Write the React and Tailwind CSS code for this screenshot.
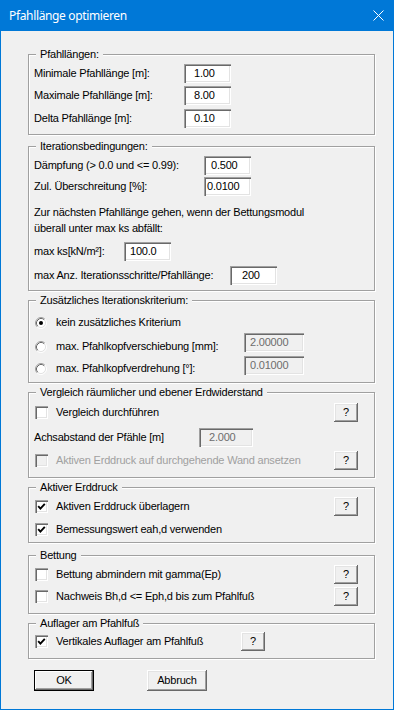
import React from "react";

const sunk =
  "shadow-[inset_1px_1px_0_#a0a0a0,inset_2px_2px_0_#696969,inset_-1px_-1px_0_#ffffff,inset_-2px_-2px_0_#e3e3e3]";
const raised =
  "shadow-[inset_-1px_-1px_0_#696969,inset_1px_1px_0_#ffffff,inset_-2px_-2px_0_#a0a0a0,inset_2px_2px_0_#e3e3e3]";

function Group({ className, title, children }) {
  return (
    <div
      className={
        "relative ml-[27px] w-[347px] shrink-0 border border-[#a0a0a0] shadow-[inset_1px_1px_0_#ffffff,1px_1px_0_#ffffff] pl-[5px] pr-[16px] flex flex-col " +
        className
      }
    >
      <span className="absolute left-[7px] -top-[7px] px-[4px] bg-[#f0f0f0] leading-[13px] whitespace-nowrap">
        {title}
      </span>
      {children}
    </div>
  );
}

function Field({ value, className, disabled }) {
  return (
    <div
      className={`h-[19px] shrink-0 leading-[19px] whitespace-nowrap ${sunk} ${
        disabled ? "bg-[#f0f0f0] text-[#6d6d6d]" : "bg-white text-black"
      } ${className}`}
    >
      {value}
    </div>
  );
}

function Help({ className = "" }) {
  return (
    <div
      className={`w-[24px] h-[19px] shrink-0 bg-[#f0f0f0] ${raised} flex items-center justify-center ${className}`}
    >
      ?
    </div>
  );
}

function Check({ checked, disabled }) {
  return (
    <span
      className={`ml-[1px] w-[13px] h-[13px] shrink-0 flex items-center justify-center ${
        disabled ? "bg-[#f0f0f0]" : "bg-white"
      } ${sunk}`}
    >
      {checked && (
        <svg width="9" height="9" viewBox="0 0 9 9">
          <path d="M1.2 4.2 L3.4 6.6 L7.8 1.8" stroke="#000" strokeWidth="1.9" fill="none" />
        </svg>
      )}
    </span>
  );
}

function Radio({ checked }) {
  return (
    <svg width="12" height="12" viewBox="0 0 12 12" className="shrink-0">
      <circle cx="6" cy="6" r="4.5" fill="#ffffff" />
      <path d="M2.11 9.89 A5.5 5.5 0 0 1 9.89 2.11" stroke="#a0a0a0" strokeWidth="1" fill="none" />
      <path d="M9.89 2.11 A5.5 5.5 0 0 1 2.11 9.89" stroke="#ffffff" strokeWidth="1" fill="none" />
      <path d="M2.82 9.18 A4.5 4.5 0 0 1 9.18 2.82" stroke="#696969" strokeWidth="1" fill="none" />
      <path d="M9.18 2.82 A4.5 4.5 0 0 1 2.82 9.18" stroke="#e3e3e3" strokeWidth="1" fill="none" />
      {checked && <circle cx="6" cy="6" r="2" fill="#000" />}
    </svg>
  );
}

function Row({ className = "", children }) {
  return <div className={`flex items-center h-[19px] shrink-0 ${className}`}>{children}</div>;
}

export default function App() {
  return (
    <div className="w-[394px] h-[710px] bg-[#0078d7] px-px pb-px flex flex-col font-['Liberation_Sans',Arial,sans-serif] text-[11px] leading-[13px] tracking-[-0.2px] text-black">
      <div className="h-[31px] shrink-0 flex items-center pl-[8px] pr-[9px]">
        <span className="font-['Noto_Sans',sans-serif] text-[12px] tracking-[-0.35px] text-white">
          Pfahllänge optimieren
        </span>
        <svg className="ml-auto" width="11" height="11" viewBox="0 0 11 11">
          <path d="M0.5 0.5 L10.5 10.5 M10.5 0.5 L0.5 10.5" stroke="#fff" strokeWidth="1" />
        </svg>
      </div>
      <div className="flex-1 bg-[#f0f0f0] flex flex-col">
        <Group className="mt-[23px] h-[81px] pt-[9px]" title="Pfahllängen:">
          <Row>
            <span className="w-[150px]">Minimale Pfahllänge [m]:</span>
            <Field value="1.00" className="w-[47px] pl-[10px]" />
          </Row>
          <Row className="mt-[3px]">
            <span className="w-[150px]">Maximale Pfahllänge [m]:</span>
            <Field value="8.00" className="w-[47px] pl-[10px]" />
          </Row>
          <Row className="mt-[4px]">
            <span className="w-[150px]">Delta Pfahllänge [m]:</span>
            <Field value="0.10" className="w-[47px] pl-[10px]" />
          </Row>
        </Group>

        <Group className="mt-[11px] h-[145px] pt-[9px]" title="Iterationsbedingungen:">
          <Row>
            <span className="w-[170px]">Dämpfung (&gt; 0.0 und &lt;= 0.99):</span>
            <Field value="0.500" className="w-[47px] pl-[7px]" />
          </Row>
          <Row className="mt-[2px]">
            <span className="w-[170px]">Zul. Überschreitung [%]:</span>
            <Field value="0.0100" className="w-[47px] pl-[3px]" />
          </Row>
          <div className="mt-[8px] leading-[16px] whitespace-nowrap">
            Zur nächsten Pfahllänge gehen, wenn der Bettungsmodul
          </div>
          <div className="leading-[16px] whitespace-nowrap">überall unter max ks abfällt:</div>
          <Row className="mt-[6px]">
            <span className="w-[90px]">max ks[kN/m²]:</span>
            <Field value="100.0" className="w-[47px] pl-[6px]" />
          </Row>
          <Row className="mt-[5px]">
            <span className="w-[196px] whitespace-nowrap">max Anz. Iterationsschritte/Pfahllänge:</span>
            <Field value="200" className="w-[47px] pl-[12px]" />
          </Row>
        </Group>

        <Group className="mt-[9px] h-[83px] pt-[15px]" title="Zusätzliches Iterationskriterium:">
          <div className="flex items-center h-[13px] gap-[9px] pl-[1px]">
            <Radio checked />
            <span>kein zusätzliches Kriterium</span>
          </div>
          <div className="flex h-[19px] mt-[4px]">
            <div className="w-[210px] flex items-center h-[13px] mt-[7px] gap-[9px] pl-[1px]">
              <Radio />
              <span>max. Pfahlkopfverschiebung [mm]:</span>
            </div>
            <Field disabled value="2.00000" className="w-[60px] pl-[6px]" />
          </div>
          <div className="flex h-[19px] mt-[4px]">
            <div className="w-[210px] flex items-center h-[13px] mt-[6px] gap-[9px] pl-[1px]">
              <Radio />
              <span>max. Pfahlkopfverdrehung [°]:</span>
            </div>
            <Field disabled value="0.01000" className="w-[60px] pl-[6px]" />
          </div>
        </Group>

        <Group className="mt-[9px] h-[86px] pt-[10px]" title="Vergleich räumlicher und ebener Erdwiderstand">
          <Row>
            <Check />
            <span className="ml-[8px]">Vergleich durchführen</span>
            <Help className="ml-auto" />
          </Row>
          <Row className="mt-[6px]">
            <span className="w-[165px]">Achsabstand der Pfähle [m]</span>
            <Field disabled value="2.000" className="w-[54px] pl-[10px]" />
          </Row>
          <Row className="mt-[4px]">
            <Check disabled />
            <span className="ml-[8px] text-[#a0a0a0] whitespace-nowrap">
              Aktiven Erddruck auf durchgehende Wand ansetzen
            </span>
            <Help className="ml-auto" />
          </Row>
        </Group>

        <Group className="mt-[9px] h-[56px] pt-[9px]" title="Aktiver Erddruck">
          <Row>
            <Check checked />
            <span className="ml-[8px]">Aktiven Erddruck überlagern</span>
            <Help className="ml-auto" />
          </Row>
          <div className="flex items-center h-[13px] mt-[7px]">
            <Check checked />
            <span className="ml-[8px]">Bemessungswert eah,d verwenden</span>
          </div>
        </Group>

        <Group className="mt-[12px] h-[59px] pt-[9px]" title="Bettung">
          <Row>
            <Check />
            <span className="ml-[8px]">Bettung abmindern mit gamma(Ep)</span>
            <Help className="ml-auto" />
          </Row>
          <Row className="mt-[3px]">
            <Check />
            <span className="ml-[8px]">Nachweis Bh,d &lt;= Eph,d bis zum Pfahlfuß</span>
            <Help className="ml-auto" />
          </Row>
        </Group>

        <Group className="mt-[9px] h-[36px] pt-[8px]" title="Auflager am Pfahlfuß">
          <Row>
            <div className="w-[207px] flex items-center">
              <Check checked />
              <span className="ml-[8px]">Vertikales Auflager am Pfahlfuß</span>
            </div>
            <Help />
          </Row>
        </Group>

        <div className="flex mt-[11px] ml-[33px] gap-[53px]">
          <div className="w-[60px] h-[21px] border border-black bg-[#f0f0f0] shadow-[inset_-1px_-1px_0_#696969,inset_1px_1px_0_#ffffff,inset_-2px_-2px_0_#a0a0a0] flex items-center justify-center">
            OK
          </div>
          <div className={`w-[60px] h-[21px] bg-[#f0f0f0] ${raised} flex items-center justify-center`}>
            Abbruch
          </div>
        </div>
      </div>
    </div>
  );
}
